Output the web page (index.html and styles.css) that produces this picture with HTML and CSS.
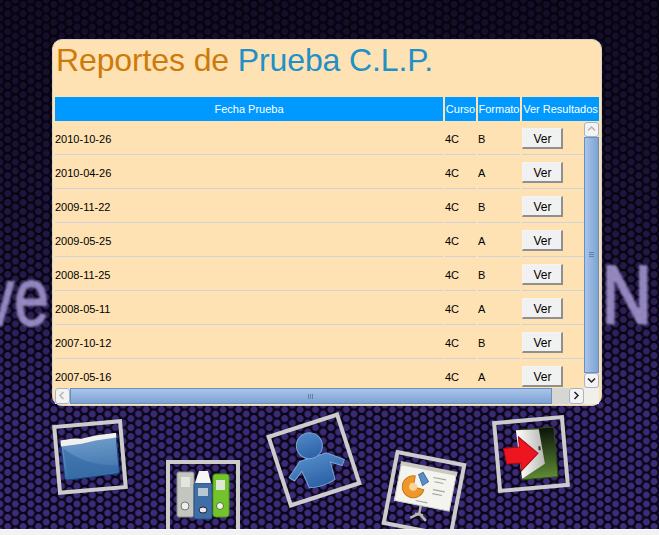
FILE: index.html
```html
<!DOCTYPE html>
<html lang="en">
<head>
    <meta charset="UTF-8">
    <title>Reportes de Prueba C.L.P.</title>
    <link rel="stylesheet" href="styles.css">
</head>
<body>
    <div class="stage">
        <span class="ghost ghost-ve"><span class="ghost-in">ve</span></span>
        <span class="ghost ghost-n"><span class="ghost-in">N</span></span>

        <div class="card">
            <h1 class="title"><span class="title-a">Reportes de</span> <span class="title-b">Prueba C.L.P.</span></h1>

            <div class="head">
                <div class="c-fecha">Fecha Prueba</div>
                <div class="c-curso">Curso</div>
                <div class="c-formato">Formato</div>
                <div class="c-ver">Ver Resultados</div>
            </div>

            <div class="scroller">
                <div class="rows">
                    <div class="row"><div class="c-fecha">2010-10-26</div><div class="c-curso">4C</div><div class="c-formato">B</div><div class="c-ver"><button class="btn">Ver</button></div></div>
                    <div class="row"><div class="c-fecha">2010-04-26</div><div class="c-curso">4C</div><div class="c-formato">A</div><div class="c-ver"><button class="btn">Ver</button></div></div>
                    <div class="row"><div class="c-fecha">2009-11-22</div><div class="c-curso">4C</div><div class="c-formato">B</div><div class="c-ver"><button class="btn">Ver</button></div></div>
                    <div class="row"><div class="c-fecha">2009-05-25</div><div class="c-curso">4C</div><div class="c-formato">A</div><div class="c-ver"><button class="btn">Ver</button></div></div>
                    <div class="row"><div class="c-fecha">2008-11-25</div><div class="c-curso">4C</div><div class="c-formato">B</div><div class="c-ver"><button class="btn">Ver</button></div></div>
                    <div class="row"><div class="c-fecha">2008-05-11</div><div class="c-curso">4C</div><div class="c-formato">A</div><div class="c-ver"><button class="btn">Ver</button></div></div>
                    <div class="row"><div class="c-fecha">2007-10-12</div><div class="c-curso">4C</div><div class="c-formato">B</div><div class="c-ver"><button class="btn">Ver</button></div></div>
                    <div class="row"><div class="c-fecha">2007-05-16</div><div class="c-curso">4C</div><div class="c-formato">A</div><div class="c-ver"><button class="btn">Ver</button></div></div>
                </div>

                <div class="vbar">
                    <div class="arrow"><svg width="15" height="14" viewBox="0 0 15 14"><path d="M4 8.5 7.5 5 11 8.5" fill="none" stroke="#b5b5b5" stroke-width="1.5"/></svg></div>
                    <div class="vthumb"><span class="grip-v"></span></div>
                    <div class="arrow"><svg width="15" height="14" viewBox="0 0 15 14"><path d="M4 5.5 7.5 9 11 5.5" fill="none" stroke="#222" stroke-width="1.5"/></svg></div>
                </div>
                <div class="hbar">
                    <div class="arrow-h"><svg width="14" height="15" viewBox="0 0 14 15"><path d="M8.5 4 5 7.5 8.5 11" fill="none" stroke="#b5b5b5" stroke-width="1.5"/></svg></div>
                    <div class="hthumb"><span class="grip-h"></span></div>
                    <div class="htrack"></div>
                    <div class="arrow-h"><svg width="14" height="15" viewBox="0 0 14 15"><path d="M5.5 4 9 7.5 5.5 11" fill="none" stroke="#222" stroke-width="1.5"/></svg></div>
                </div>
                <div class="corner"></div>
            </div>
        </div>

        <!-- carpeta -->
        <div class="frame f-folder">
            <svg width="58" height="44" viewBox="0 0 58 44">
                <defs><linearGradient id="gf" x1="0" y1="0" x2="0" y2="1"><stop offset="0" stop-color="#6f9ccb"/><stop offset="1" stop-color="#3a6fa9"/></linearGradient></defs>
                <path d="M1 6 57 3V39Q57 41 54 41L5 43Q2 43 2 40Z" fill="url(#gf)" stroke="#17447e" stroke-width="1.2"/>
                <path d="M1 3 14 2 22 3 36 1 57 0 57 5 36 6 22 8 1 9Z" fill="#f1f1ee"/>
                <path d="M3 11Q22 30 56 33V39L5 42Z" fill="#3268a3" opacity=".6"/>
            </svg>
        </div>

        <!-- archivadores -->
        <div class="frame f-binders">
            <svg width="54" height="50" viewBox="0 0 54 50">
                <rect x="1" y="2" width="17" height="45" rx="2" fill="#c3c5bf" stroke="#8d8f8a"/>
                <rect x="5" y="7" width="9" height="10" fill="#e4e4e0"/>
                <circle cx="9" cy="36" r="4" fill="#eee" stroke="#777"/>
                <rect x="18" y="13" width="18" height="36" rx="2" fill="#3f6ea6" stroke="#26507f"/>
                <path d="M19 13 23 1H32L35 13Z" fill="#f6f6f4"/>
                <rect x="22" y="18" width="10" height="8" fill="#b9c6d4"/>
                <ellipse cx="27" cy="40" rx="4" ry="3" fill="#e8e8e8" stroke="#223"/>
                <rect x="37" y="4" width="16" height="43" rx="3" fill="#74c32d" stroke="#4f9a1a"/>
                <rect x="40" y="10" width="9" height="10" fill="#dfe8d2"/>
                <circle cx="44" cy="36" r="3.5" fill="#f2f2f2" stroke="#4f7a22"/>
            </svg>
        </div>

        <!-- persona -->
        <div class="frame f-person">
            <svg width="60" height="58" viewBox="0 0 60 58">
                <defs><linearGradient id="gp" x1="0" y1="0" x2="0" y2="1"><stop offset="0" stop-color="#4f86c4"/><stop offset="1" stop-color="#2c62a6"/></linearGradient></defs>
                <path d="M16 26H44L59 38 55 43 45 36 44 54Q30 58 17 54L15 36 5 43 1 38Z" fill="url(#gp)" stroke="#7ba6d6"/>
                <circle cx="30" cy="14" r="13" fill="url(#gp)" stroke="#7ba6d6"/>
            </svg>
        </div>

        <!-- presentacion -->
        <div class="frame f-chart">
            <svg width="58" height="58" viewBox="0 0 58 58">
                <rect x="1" y="3" width="56" height="38" fill="#f4f4ef" stroke="#ccc"/>
                <rect x="0" y="1" width="58" height="4" fill="#c9c9c2"/>
                <path d="M17 13A11 11 0 1 0 28 25L17 24Z" fill="#f0972a" stroke="#c9761b"/>
                <circle cx="17" cy="24" r="4" fill="#f8d49a"/>
                <path d="M20 11 24 8 31 16 26 21Z" fill="#5d8fc6" stroke="#3d6da5"/>
                <path d="M35 11H48M37 15H46M37 23H49M37 27H47M22 37H34" stroke="#a5a5a0" stroke-width="1.2"/>
                <path d="M28 41V50M28 49 20 55M28 49 36 55M24 50H32" stroke="#b9b9b0" stroke-width="2.5" fill="none"/>
            </svg>
        </div>

        <!-- salir -->
        <div class="frame f-exit">
            <svg width="56" height="52" viewBox="0 0 56 52">
                <defs>
                    <linearGradient id="gd" x1="0" y1="0" x2="0" y2="1"><stop offset="0" stop-color="#0a120a"/><stop offset="1" stop-color="#5f8a35"/></linearGradient>
                    <linearGradient id="gw" x1="0" y1="0" x2="1" y2="0"><stop offset="0" stop-color="#fff"/><stop offset="1" stop-color="#b9b9b4"/></linearGradient>
                </defs>
                <rect x="17" y="1" width="36" height="50" fill="url(#gd)" stroke="#2e4a1a"/>
                <path d="M15 1 38 2 41 37 17 50Z" fill="url(#gw)"/>
                <path d="M1 18H17V8L35 26 17 42V34H3Z" fill="#ee1520" stroke="#a80c12"/>
                <rect x="36" y="19" width="2" height="4" fill="#333"/>
            </svg>
        </div>
    </div>

    <div class="strip"><span class="strip-text">Sistema de reportes</span></div>
</body>
</html>
```

FILE: styles.css
```css
* {box-sizing: border-box;}
html, body {margin: 0; height: 100%;}
body {font-family: "Liberation Sans", Arial, sans-serif; overflow: hidden; background: #f2f2f2;}

/* fondo de hexagonos: oscurecido arriba, puntos, color base */
.stage {
    position: relative;
    width: 659px;
    height: 529px;
    overflow: hidden;
    padding: 39px 0 0 52px;
    background-color: #0a0618;
    background-image:
        linear-gradient(rgba(5, 3, 12, .74) 0, rgba(5, 3, 12, .66) 130px, rgba(5, 3, 12, .42) 280px, rgba(5, 3, 12, .06) 410px, rgba(5, 3, 12, 0) 529px),
        radial-gradient(circle at 50% 50%, #3d2c7a 0, #3d2c7a 3px, transparent 3.9px),
        radial-gradient(circle at 50% 50%, #3d2c7a 0, #3d2c7a 3px, transparent 3.9px);
    background-size: 100% 100%, 15.4px 9px, 15.4px 9px;
    background-position: 0 0, 0 0, 7.7px 4.5px;
}

.ghost {position: absolute; overflow: hidden; height: 90px;}
.ghost-in {
    display: block;
    color: #a99bd6;
    font-size: 82px;
    line-height: 90px;
    -webkit-text-stroke: 2px #a99bd6;
    filter: blur(1.2px);
    opacity: .85;
    transform: scaleX(.76);
    transform-origin: 0 0;
}
.ghost-ve {left: 0; top: 252px; width: 52px;}
.ghost-ve .ghost-in {margin-left: -17px;}
.ghost-n {left: 602px; top: 250px; width: 57px;}
.ghost-n .ghost-in {transform: scaleX(.84); -webkit-text-stroke-width: 3px;}

.card {
    position: relative;
    width: 550px;
    height: 367px;
    padding: 0 2px;
    background: #fee2b3;
    border: 1px solid #d8d4cc;
    border-radius: 10px;
}

.title {margin: 0; height: 57px; padding: 1px 0 0 1px; font-size: 32px; font-weight: normal; letter-spacing: -.12px; line-height: 38px;}
.title-a {color: #cc7a0a;}
.title-b {color: #2190c8;}

.head {display: flex; gap: 2px; height: 24px; font-size: 11px; line-height: 24px; color: #fff;}
.head > div {background: #0099ff; text-align: center; white-space: nowrap; overflow: hidden;}
.c-fecha {width: 388px; flex: none;}
.c-curso {width: 31px; flex: none;}
.c-formato {width: 42px; flex: none;}
.c-ver {width: 77px; flex: none;}

.scroller {
    display: grid;
    grid-template-columns: 529px 15px;
    grid-template-rows: 267px 16px;
    width: 544px;
}
.rows {overflow: hidden; background: #fee2b3;}
.row {display: flex; gap: 2px; height: 34px; font-size: 11px; color: #000; align-items: flex-start;}
.row > div {height: 34px; line-height: 37px; border-bottom: 1px solid #cfd2d8;}
.c-ver .btn {display: block;}
.btn {
    width: 41px;
    height: 21px;
    margin-top: 7px;
    padding: 1px 0 0 1px;
    font: 12px "Liberation Sans", Arial, sans-serif;
    color: #000;
    background: #f1f1f1;
    border: 1px solid;
    border-color: #f4f4f4 #8f8f8f #8f8f8f #f4f4f4;
    border-width: 1px 2px 2px 1px;
}

.vbar {display: flex; flex-direction: column; margin-top: 1px; background: #e6e6e6;}
.arrow {height: 15px; flex: none; background: #f3f3f3; border: 1px solid #a9b4c0; border-radius: 3px;}
.arrow svg, .arrow-h svg {display: block; margin: -1px;}
.vthumb {
    flex: 1;
    display: flex;
    align-items: center;
    justify-content: center;
    background: linear-gradient(90deg, #a9c5e8, #8eb0dc 60%, #7ea2d1);
    border: 1px solid #6b8fbf;
}
.grip-v {width: 5px; height: 6px; background: repeating-linear-gradient(#5f7fa8 0 1px, transparent 1px 2px);}

.hbar {display: flex; background: #e6e6e6;}
.arrow-h {width: 15px; flex: none; background: #f3f3f3; border: 1px solid #a9b4c0; border-radius: 3px;}
.hthumb {
    width: 482px;
    flex: none;
    display: flex;
    align-items: center;
    justify-content: center;
    background: linear-gradient(#a9c5e8, #8eb0dc 60%, #7ea2d1);
    border: 1px solid #6b8fbf;
}
.grip-h {width: 6px; height: 5px; background: repeating-linear-gradient(90deg, #5f7fa8 0 1px, transparent 1px 2px);}
.htrack {flex: 1; background: #d6d6d3;}
.corner {background: #f1efe9;}

/* iconos sueltos sobre el fondo, cada uno con su marco girado */
.frame {position: absolute; display: flex; align-items: center; justify-content: center; border: 4px solid #cccccc;}
.f-folder {left: 55px; top: 422px; width: 70px; height: 70px; transform: rotate(-5deg);}
.f-binders {left: 166px; top: 460px; width: 74px; height: 78px; padding-bottom: 8px;}
.f-person {left: 276px; top: 422px; width: 76px; height: 76px; transform: rotate(-18deg);}
.f-chart {left: 388px; top: 456px; width: 72px; height: 76px; transform: rotate(11deg);}
.f-exit {left: 495px; top: 418px; width: 72px; height: 72px; transform: rotate(-5deg);}

.strip {height: 6px; overflow: hidden; background: #f2f2f2; border-top: 1px solid #fff; font-size: 11px; line-height: 11px; color: #222;}
.strip-text {display: block; margin: 4px 0 0 48px;}
```
